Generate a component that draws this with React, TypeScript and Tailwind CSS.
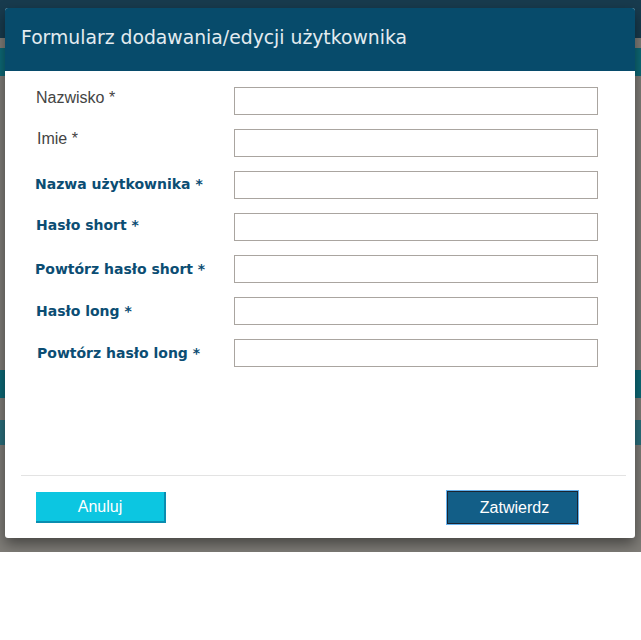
import React from "react";

const fields = [
  { label: "Nazwisko *", bold: false, shift: "-mt-[6px] pl-[1px]" },
  { label: "Imie *", bold: false, shift: "-mt-[9px] pl-[2px]" },
  { label: "Nazwa użytkownika *", bold: true, shift: "-mt-[2px]" },
  { label: "Hasło short *", bold: true, shift: "-mt-[4px] pl-[1px]" },
  { label: "Powtórz hasło short *", bold: true, shift: "" },
  { label: "Hasło long *", bold: true, shift: "pl-[1px]" },
  { label: "Powtórz hasło long *", bold: true, shift: "pl-[2px]" },
];

function Backdrop() {
  return (
    <div className="flex flex-col h-[552px] bg-[#7f7d78]">
      <div className="h-[38px] bg-[#183b4e]" />
      <div className="h-[10px]" />
      <div className="h-[28px] bg-[#0d6977]" />
      <div className="h-[294px]" />
      <div className="h-[28px] bg-[#0d6977]" />
      <div className="h-[22px]" />
      <div className="h-[25px] bg-[#2a6f7c]" />
    </div>
  );
}

export default function App() {
  return (
    <div className="relative w-full bg-white" style={{ fontFamily: "'Liberation Sans', Arial, sans-serif" }}>
      <Backdrop />
      <div className="absolute left-[5px] top-[8px] w-[630px] h-[530px] bg-white rounded-[3px] shadow-[0_6px_14px_rgba(0,0,0,0.45)] flex flex-col overflow-hidden">
        <div className="h-[63px] bg-[#074b6b] flex items-center pl-[16px] pb-[2px]">
          <h1 className="text-[18.8px] text-[#e3ebf0]" style={{ fontFamily: "'DejaVu Sans', Verdana, sans-serif" }}>
            Formularz dodawania/edycji użytkownika
          </h1>
        </div>
        <div className="flex flex-col gap-[14px] pt-[16px] pl-[30px]">
          {fields.map((f) => (
            <div key={f.label} className="flex items-center h-[28px]">
              <div className={`w-[199px] ${f.shift}`}>
                {f.bold ? (
                  <span className="text-[14px] font-bold text-[#0b4d73]" style={{ fontFamily: "'DejaVu Sans', Verdana, sans-serif" }}>
                    {f.label}
                  </span>
                ) : (
                  <span className="text-[16px] text-[#444444]">{f.label}</span>
                )}
              </div>
              <input className="w-[364px] h-[28px] border border-[#aaa5a0] bg-white outline-none" />
            </div>
          ))}
        </div>
        <div className="flex-1" />
        <div className="mx-[16px] mr-[9px] border-t border-[#e3e3e3]" />
        <div className="flex justify-between items-center pl-[31px] pr-[57px] pt-[15px] pb-[14px]">
          <button className="w-[130px] h-[31px] bg-[#0cc6e1] border-r-2 border-b-2 border-[#0a8db0] text-white text-[16px]">
            Anuluj
          </button>
          <button className="w-[131px] h-[33px] pl-[4px] bg-[#125e87] border border-[#1b2430] ring-1 ring-[#66b3ef] text-white text-[16px]">
            Zatwierdz
          </button>
        </div>
      </div>
    </div>
  );
}
